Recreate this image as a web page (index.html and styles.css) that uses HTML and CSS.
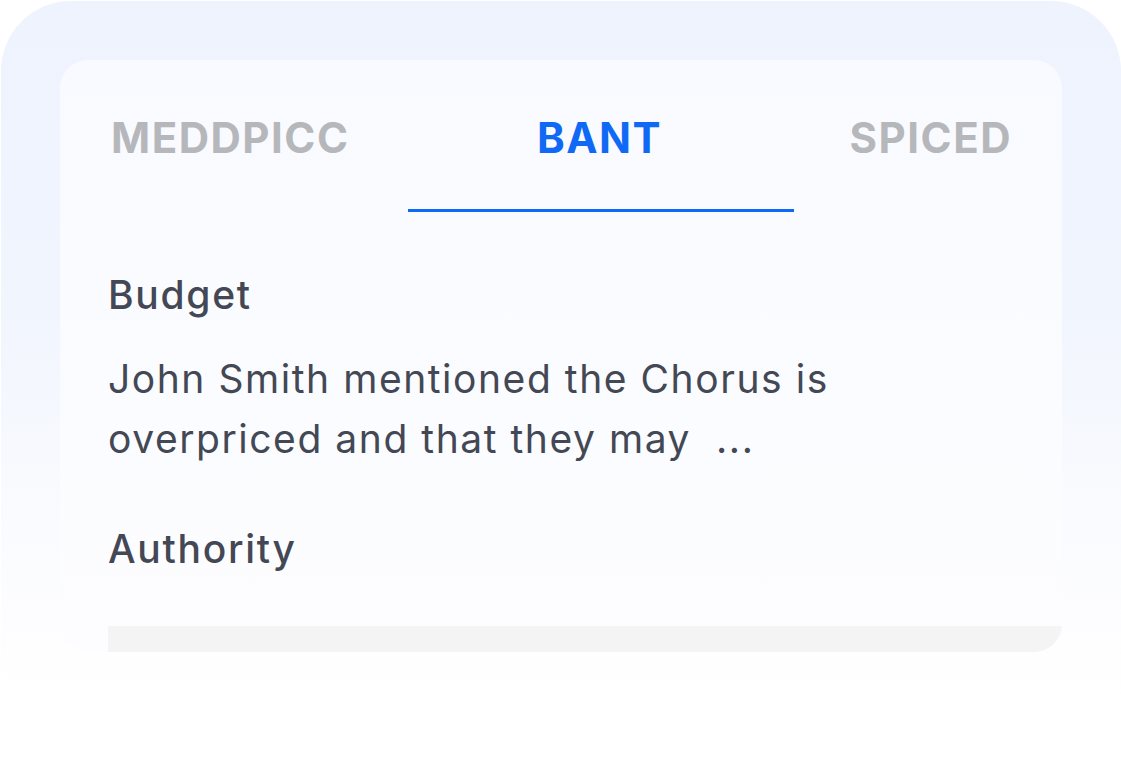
FILE: index.html
```html
<!DOCTYPE html>
<html lang="en">
<head>
<meta charset="utf-8">
<title>BANT</title>
<link rel="stylesheet" href="styles.css">
</head>
<body>
<div class="frame">
  <div class="card">
    <nav class="tabs">
      <span class="tab">MEDDPICC</span>
      <span class="tab tab-active">BANT</span>
      <span class="tab">SPICED</span>
    </nav>
    <section class="field">
      <h3 class="field-label">Budget</h3>
      <p class="field-text">John Smith mentioned the Chorus is overpriced and that they may&nbsp; ...</p>
    </section>
    <section class="field field-last">
      <h3 class="field-label field-label-next">Authority</h3>
    </section>
    <div class="placeholder-bar"></div>
  </div>
</div>
</body>
</html>
```
FILE: styles.css
```css
html, body {
  margin: 0;
  padding: 0;
  background: #ffffff;
}
body {
  font-family: Inter, "Noto Sans", sans-serif;
  width: 1121px;
  height: 772px;
  overflow: hidden;
}
.frame {
  box-sizing: border-box;
  margin: 1px 0 0 1px;
  width: 1120px;
  height: 771px;
  padding: 59px 59px 0 59px;
  border-radius: 70px 70px 0 0;
  background: linear-gradient(180deg, #eef3fe 0%, #f1f5fe 40%, #f8fafe 62%, #fdfdff 80%, #ffffff 90%);
}
.card {
  box-sizing: border-box;
  height: 592px;
  border-radius: 28px;
  overflow: hidden;
  padding-left: 48px;
  background: linear-gradient(180deg, #f8faff 0%, #fbfcff 60%, #fdfdff 100%);
  display: flex;
  flex-direction: column;
}
.tabs {
  display: flex;
  justify-content: space-between;
  padding: 53px 50px 0 3px;
}
.tab {
  position: relative;
  font-size: 42px;
  line-height: 50px;
  font-weight: 700;
  letter-spacing: 1.5px;
  color: #b6b7bb;
  padding-bottom: 49px;
}
.tab-active {
  color: #0f69f5;
}
.tab-active::after {
  content: "";
  position: absolute;
  left: -129px;
  right: -132px;
  bottom: 0;
  height: 3px;
  background: #0f69f5;
}
.field {
  display: flex;
  flex-direction: column;
}
.field-label {
  margin: 61px 0 0 0;
  font-size: 39px;
  line-height: 44px;
  font-weight: 500;
  letter-spacing: 1.7px;
  color: #434854;
}
.field-label-next {
  margin-top: 58px;
}
.field-text {
  margin: 32px 0 0 0;
  max-width: 820px;
  font-size: 39px;
  line-height: 60px;
  font-weight: 400;
  letter-spacing: 1.55px;
  color: #434854;
}
.placeholder-bar {
  margin-top: 55px;
  height: 40px;
  background: #f4f4f4;
}
```
